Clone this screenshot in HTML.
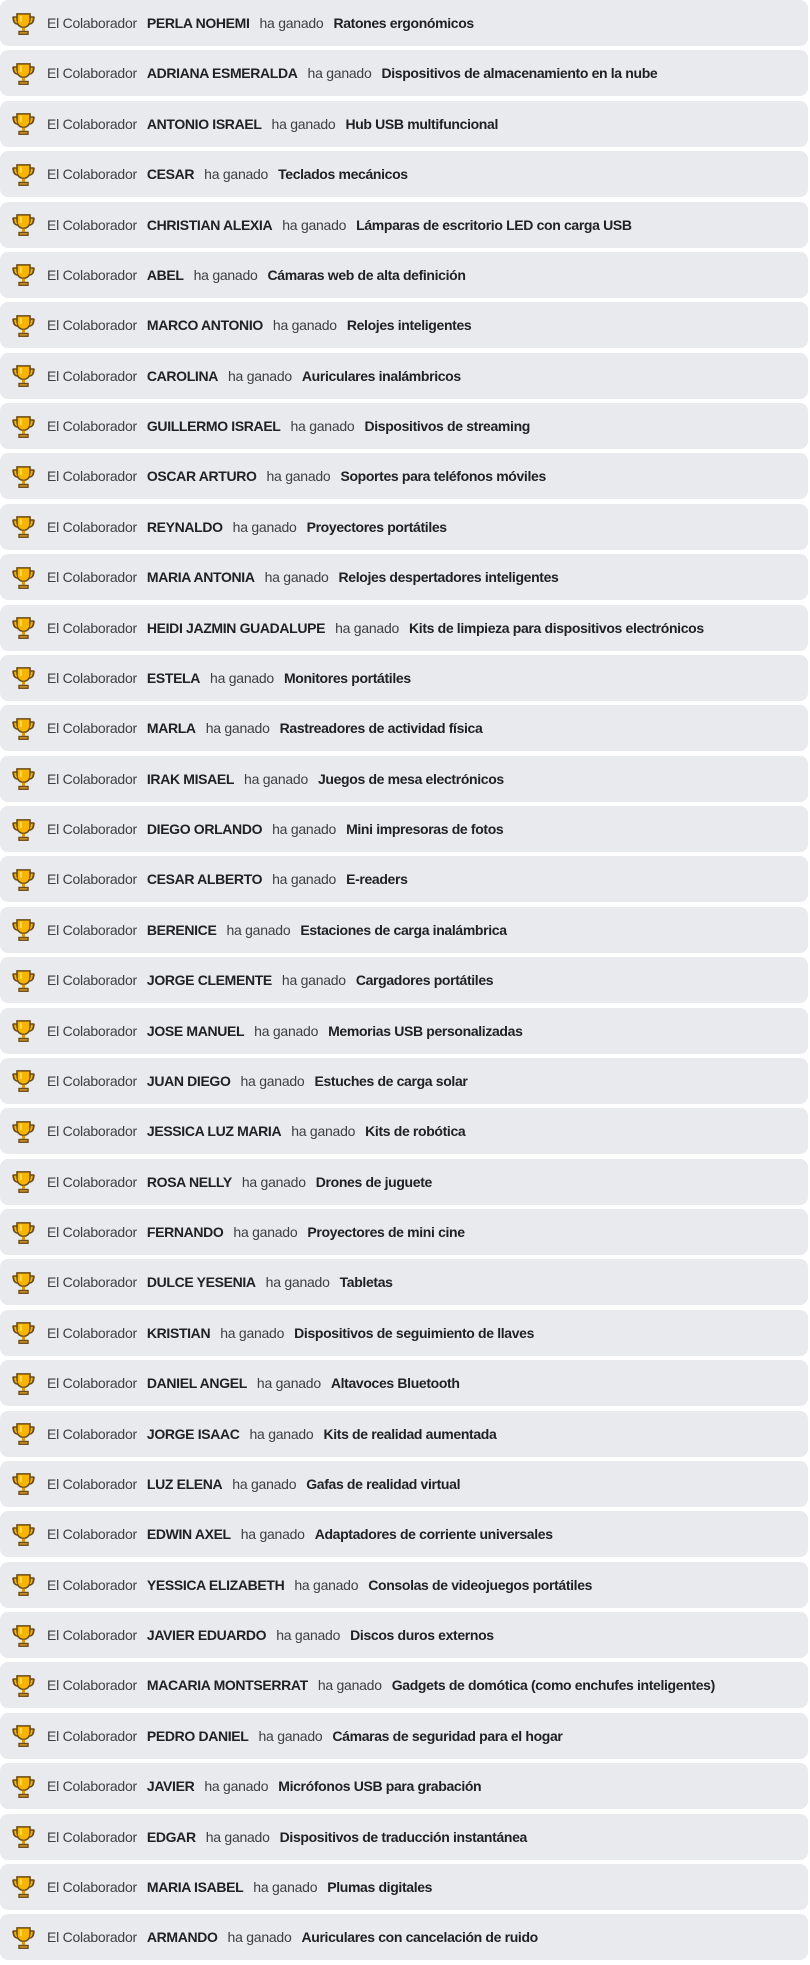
<!DOCTYPE html>
<html><head><meta charset="utf-8"><style>
html,body{margin:0;padding:0;background:#fff;width:810px;height:1965px;overflow:hidden}
.r{box-sizing:border-box;height:46px;margin-bottom:4.385px;width:808px;background:#e8eaed;border-radius:8px;display:flex;align-items:center;padding-left:12px;font-family:"Liberation Sans",Arial,sans-serif;font-size:14px;letter-spacing:-0.25px;color:#3c4043;white-space:nowrap}
.r svg{width:23px;height:25px;margin-right:12px;flex:none}
.r b{color:#202124;margin:0 10px;letter-spacing:-0.35px}
</style></head><body>
<svg width="0" height="0" style="position:absolute"><defs><symbol id="t" viewBox="0 0 22 24"><path d="M4 2h14v3h2.5c1 0 1.5.6 1.3 1.6l-.6 3C20.8 11.5 19 13 17 13.2 15.8 15 14 16 12.2 16.3V18h-2.4v-1.7C8 16 6.2 15 5 13.2 3 13 1.2 11.5.8 9.6l-.6-3C0 5.6.5 5 1.5 5H4z" fill="#6b4a1b"/><path d="M5.5 3.5h11v6c0 3-2.4 5.5-5.5 5.5S5.5 12.5 5.5 9.5z" fill="#f7b500"/><path d="M4 6.5H2l.5 2.8c.3 1.4 1.4 2.3 2.6 2.4C4.3 10.2 4 8.4 4 6.5zM18 6.5h2l-.5 2.8c-.3 1.4-1.4 2.3-2.6 2.4.8-1.5 1.1-3.3 1.1-5.2z" fill="#f7b500"/><path d="M9.5 16h3v3h-3z" fill="#d99a00"/><path d="M6 19h10v4H6z" fill="#6b4a1b"/><path d="M7.3 20.2h7.4v1.6H7.3z" fill="#c98f2a"/><path d="M7.5 4.5h2v6h-2z" fill="#ffd95a"/></symbol></defs></svg>
<div class="r"><svg><use href="#t"/></svg>El Colaborador<b>PERLA NOHEMI</b>ha ganado<b>Ratones ergonómicos</b></div>
<div class="r"><svg><use href="#t"/></svg>El Colaborador<b>ADRIANA ESMERALDA</b>ha ganado<b>Dispositivos de almacenamiento en la nube</b></div>
<div class="r"><svg><use href="#t"/></svg>El Colaborador<b>ANTONIO ISRAEL</b>ha ganado<b>Hub USB multifuncional</b></div>
<div class="r"><svg><use href="#t"/></svg>El Colaborador<b>CESAR</b>ha ganado<b>Teclados mecánicos</b></div>
<div class="r"><svg><use href="#t"/></svg>El Colaborador<b>CHRISTIAN ALEXIA</b>ha ganado<b>Lámparas de escritorio LED con carga USB</b></div>
<div class="r"><svg><use href="#t"/></svg>El Colaborador<b>ABEL</b>ha ganado<b>Cámaras web de alta definición</b></div>
<div class="r"><svg><use href="#t"/></svg>El Colaborador<b>MARCO ANTONIO</b>ha ganado<b>Relojes inteligentes</b></div>
<div class="r"><svg><use href="#t"/></svg>El Colaborador<b>CAROLINA</b>ha ganado<b>Auriculares inalámbricos</b></div>
<div class="r"><svg><use href="#t"/></svg>El Colaborador<b>GUILLERMO ISRAEL</b>ha ganado<b>Dispositivos de streaming</b></div>
<div class="r"><svg><use href="#t"/></svg>El Colaborador<b>OSCAR ARTURO</b>ha ganado<b>Soportes para teléfonos móviles</b></div>
<div class="r"><svg><use href="#t"/></svg>El Colaborador<b>REYNALDO</b>ha ganado<b>Proyectores portátiles</b></div>
<div class="r"><svg><use href="#t"/></svg>El Colaborador<b>MARIA ANTONIA</b>ha ganado<b>Relojes despertadores inteligentes</b></div>
<div class="r"><svg><use href="#t"/></svg>El Colaborador<b>HEIDI JAZMIN GUADALUPE</b>ha ganado<b>Kits de limpieza para dispositivos electrónicos</b></div>
<div class="r"><svg><use href="#t"/></svg>El Colaborador<b>ESTELA</b>ha ganado<b>Monitores portátiles</b></div>
<div class="r"><svg><use href="#t"/></svg>El Colaborador<b>MARLA</b>ha ganado<b>Rastreadores de actividad física</b></div>
<div class="r"><svg><use href="#t"/></svg>El Colaborador<b>IRAK MISAEL</b>ha ganado<b>Juegos de mesa electrónicos</b></div>
<div class="r"><svg><use href="#t"/></svg>El Colaborador<b>DIEGO ORLANDO</b>ha ganado<b>Mini impresoras de fotos</b></div>
<div class="r"><svg><use href="#t"/></svg>El Colaborador<b>CESAR ALBERTO</b>ha ganado<b>E-readers</b></div>
<div class="r"><svg><use href="#t"/></svg>El Colaborador<b>BERENICE</b>ha ganado<b>Estaciones de carga inalámbrica</b></div>
<div class="r"><svg><use href="#t"/></svg>El Colaborador<b>JORGE CLEMENTE</b>ha ganado<b>Cargadores portátiles</b></div>
<div class="r"><svg><use href="#t"/></svg>El Colaborador<b>JOSE MANUEL</b>ha ganado<b>Memorias USB personalizadas</b></div>
<div class="r"><svg><use href="#t"/></svg>El Colaborador<b>JUAN DIEGO</b>ha ganado<b>Estuches de carga solar</b></div>
<div class="r"><svg><use href="#t"/></svg>El Colaborador<b>JESSICA LUZ MARIA</b>ha ganado<b>Kits de robótica</b></div>
<div class="r"><svg><use href="#t"/></svg>El Colaborador<b>ROSA NELLY</b>ha ganado<b>Drones de juguete</b></div>
<div class="r"><svg><use href="#t"/></svg>El Colaborador<b>FERNANDO</b>ha ganado<b>Proyectores de mini cine</b></div>
<div class="r"><svg><use href="#t"/></svg>El Colaborador<b>DULCE YESENIA</b>ha ganado<b>Tabletas</b></div>
<div class="r"><svg><use href="#t"/></svg>El Colaborador<b>KRISTIAN</b>ha ganado<b>Dispositivos de seguimiento de llaves</b></div>
<div class="r"><svg><use href="#t"/></svg>El Colaborador<b>DANIEL ANGEL</b>ha ganado<b>Altavoces Bluetooth</b></div>
<div class="r"><svg><use href="#t"/></svg>El Colaborador<b>JORGE ISAAC</b>ha ganado<b>Kits de realidad aumentada</b></div>
<div class="r"><svg><use href="#t"/></svg>El Colaborador<b>LUZ ELENA</b>ha ganado<b>Gafas de realidad virtual</b></div>
<div class="r"><svg><use href="#t"/></svg>El Colaborador<b>EDWIN AXEL</b>ha ganado<b>Adaptadores de corriente universales</b></div>
<div class="r"><svg><use href="#t"/></svg>El Colaborador<b>YESSICA ELIZABETH</b>ha ganado<b>Consolas de videojuegos portátiles</b></div>
<div class="r"><svg><use href="#t"/></svg>El Colaborador<b>JAVIER EDUARDO</b>ha ganado<b>Discos duros externos</b></div>
<div class="r"><svg><use href="#t"/></svg>El Colaborador<b>MACARIA MONTSERRAT</b>ha ganado<b>Gadgets de domótica (como enchufes inteligentes)</b></div>
<div class="r"><svg><use href="#t"/></svg>El Colaborador<b>PEDRO DANIEL</b>ha ganado<b>Cámaras de seguridad para el hogar</b></div>
<div class="r"><svg><use href="#t"/></svg>El Colaborador<b>JAVIER</b>ha ganado<b>Micrófonos USB para grabación</b></div>
<div class="r"><svg><use href="#t"/></svg>El Colaborador<b>EDGAR</b>ha ganado<b>Dispositivos de traducción instantánea</b></div>
<div class="r"><svg><use href="#t"/></svg>El Colaborador<b>MARIA ISABEL</b>ha ganado<b>Plumas digitales</b></div>
<div class="r"><svg><use href="#t"/></svg>El Colaborador<b>ARMANDO</b>ha ganado<b>Auriculares con cancelación de ruido</b></div>
</body></html>
